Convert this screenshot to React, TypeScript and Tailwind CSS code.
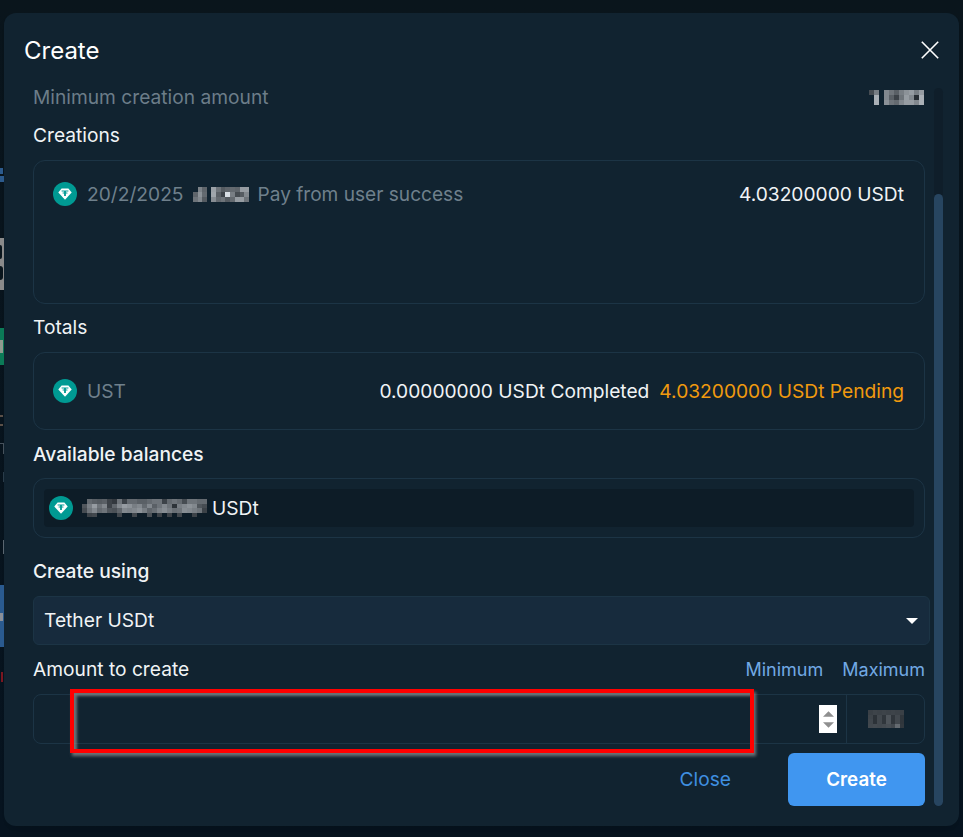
import React from "react";

function Tether({ className = "" }: { className?: string }) {
  return (
    <svg viewBox="0 0 24 24" className={`w-6 h-6 shrink-0 ${className}`}>
      <circle cx="12" cy="12" r="12" fill="#009a93" />
      <path d="M8.6 6.4h6.8l3.3 4.2L12 17.8 5.3 10.6z" fill="#ffffff" />
      <path d="M8.6 8.4h6.8v1.2h-2.5v0.8c1.2.1 2.1.3 2.1.6s-.9.5-2.1.6v2.4h-1.8v-2.4c-1.2-.1-2.1-.3-2.1-.6s.9-.5 2.1-.6v-.8H8.6z" fill="#009a93" />
    </svg>
  );
}

function Mosaic({ rows, sx, sy = sx, className = "" }: { rows: number[][]; sx: number; sy?: number; className?: string }) {
  const w = Math.max(...rows.map((r) => r.length)) * sx;
  const h = rows.length * sy;
  return (
    <svg width={w} height={h} viewBox={`0 0 ${w} ${h}`} shapeRendering="crispEdges" className={`shrink-0 ${className}`}>
      {rows.map((r, y) =>
        r.map((v, x) =>
          v > 0 ? <rect key={`${x}-${y}`} x={x * sx} y={y * sy} width={sx} height={sy} fill={`rgb(${v},${v + 6},${v + 12})`} /> : null
        )
      )}
    </svg>
  );
}

const dateLeft = [
  [0, 125, 95],
  [95, 140, 100],
  [110, 130, 85],
];
const dateRight = [
  [155, 110, 85, 95, 100, 95, 150, 150],
  [160, 90, 60, 215, 120, 70, 85, 130],
  [135, 100, 110, 85, 100, 150, 150, 110],
];
const minBlur = [
  [70, 120, 0, 130, 110, 90, 120, 140, 150, 120, 150],
  [0, 170, 0, 130, 90, 60, 110, 150, 130, 40, 170],
  [0, 170, 0, 140, 110, 100, 130, 150, 150, 130, 170],
];
const balBlur = [
  [0, 100, 90, 85, 90, 60, 50, 110, 60, 100, 100, 90, 90, 100, 110, 110, 60, 100, 110, 100, 70, 110, 110, 100, 100],
  [80, 120, 150, 110, 130, 60, 95, 130, 150, 140, 120, 130, 100, 130, 90, 110, 130, 110, 45, 120, 130, 140, 130, 80, 70],
  [70, 110, 130, 100, 110, 80, 75, 95, 130, 125, 130, 140, 120, 95, 105, 125, 135, 120, 105, 110, 135, 130, 120, 110, 60],
  [0, 60, 65, 0, 0, 0, 0, 65, 0, 0, 65, 0, 0, 75, 0, 60, 0, 60, 0, 65, 0, 0, 60, 0, 0],
];
const unitBlur = [
  [58, 62, 60, 62, 60, 62, 60, 58],
  [62, 44, 66, 48, 78, 48, 66, 48],
  [64, 44, 66, 48, 78, 48, 66, 48],
  [66, 68, 66, 68, 72, 66, 100, 50],
];

export default function App() {
  return (
    <div className="relative w-[963px] h-[837px] overflow-hidden bg-gradient-to-b from-[#0a151c] to-[#071420] pl-[4px] pt-[13px] font-['Inter',sans-serif] text-[19.2px] text-white">
      {/* page behind the dialog, showing at its left edge */}
      <div className="absolute left-0 top-[168px] h-[6px] w-[3px] bg-[#2c5a8c]" />
      <div className="absolute left-0 top-[176px] h-[6px] w-[4px] bg-[#2c5a8c]" />
      <div className="absolute left-0 top-[238px] h-[52px] w-[4px] bg-[#8a8a8a]" />
      <div className="absolute left-0 top-[245px] h-[14px] w-[2px] rounded-r-full bg-[#0a151c]" />
      <div className="absolute left-0 top-[266px] h-[14px] w-[3px] rounded-r-full bg-[#0a151c]" />
      <div className="absolute left-0 top-[328px] h-[37px] w-[4px] bg-[#0b7a57]" />
      <div className="absolute left-0 top-[340px] h-[13px] w-[3px] bg-[#8f9a8f]" />
      <div className="absolute left-0 top-[415px] h-[2px] w-[3px] bg-[#5a5048]" />
      <div className="absolute left-0 top-[424px] h-[2px] w-[3px] bg-[#5a5048]" />
      <div className="absolute left-0 top-[443px] h-[1px] w-[4px] bg-[#46525c]" />
      <div className="absolute left-[3px] top-[443px] h-[11px] w-[1px] bg-[#46525c]" />
      <div className="absolute left-[3px] top-[472px] h-[10px] w-[1px] bg-[#2a3c4a]" />
      <div className="absolute left-[3px] top-[540px] h-[14px] w-[1px] bg-[#5a6670]" />
      <div className="absolute left-0 top-[585px] h-[62px] w-[4px] bg-[#2a5a8f]" />
      <div className="absolute left-0 top-[613px] h-[8px] w-[3px] bg-[#8a8f98]" />
      <div className="absolute left-[1px] top-[672px] h-[10px] w-[2px] bg-[#7a1620]" />

      <div className="flex h-[813px] w-[955px] flex-col rounded-xl bg-[#112330] shadow-lg">
        <div className="flex h-[74px] shrink-0 items-center justify-between pl-5 pr-5">
          <h1 className="pt-[1px] text-[24px] leading-none font-normal">Create</h1>
          <svg viewBox="0 0 18 18" className="h-[18px] w-[18px]" fill="none" stroke="#ffffff" strokeWidth="1.6">
            <path d="M0.8 0.8 17.2 17.2M17.2 0.8 0.8 17.2" />
          </svg>
        </div>

        <div className="flex min-h-0 flex-1 pl-[29px] pr-[16px]">
          <div className="flex w-[892px] flex-col">
            <div className="flex h-[20px] items-center justify-between text-[#6c7d89]">
              <span>Minimum creation amount</span>
              <Mosaic rows={minBlur} sx={5} className="mr-[1px]" />
            </div>
            <div className="mt-[18px] h-[20px] leading-[20px] text-[#f0f3f5]">Creations</div>
            <div className="mt-[15px] flex h-[144px] items-start justify-between rounded-xl border border-[#1c3445] pl-[19px] pr-[20px] pt-[21px]">
              <div className="flex h-[24px] items-center text-[#6f808c]">
                <Tether />
                <span className="ml-[10px] w-[96px]">20/2/2025</span>
                <Mosaic rows={dateLeft} sx={4.5} sy={5} className="ml-[10px]" />
                <Mosaic rows={dateRight} sx={4.75} sy={5} className="ml-[4px]" />
                <span className="ml-[9px] text-[19.1px]">Pay from user success</span>
              </div>
              <span className="h-[24px] leading-[24px] text-[#f0f3f5]">4.03200000 USDt</span>
            </div>

            <div className="mt-[13px] h-[20px] leading-[20px] text-[#f0f3f5]">Totals</div>
            <div className="mt-[15px] flex h-[78px] items-center justify-between rounded-xl border border-[#1c3445] pl-[19px] pr-[20px]">
              <div className="flex items-center text-[#6f808c]">
                <Tether />
                <span className="ml-[10px]">UST</span>
              </div>
              <div className="flex items-center">
                <span className="text-[#f0f3f5]">0.00000000 USDt Completed</span>
                <span className="ml-[10px] text-[#f09a0e]">4.03200000 USDt Pending</span>
              </div>
            </div>

            <div className="mt-[14px] h-[20px] leading-[20px] font-medium text-[#f0f3f5]">Available balances</div>
            <div className="mt-[14px] flex h-[60px] items-center rounded-xl border border-[#1c3445] px-[10px]">
              <div className="flex h-[38px] w-full items-center rounded-sm bg-[#0d1c27] pl-[5px]">
                <Tether />
                <Mosaic rows={balBlur} sx={5} sy={4.5} className="ml-[9px]" />
                <span className="ml-[5px] text-[#f0f3f5]">USDt</span>
              </div>
            </div>

            <div className="mt-[23px] h-[20px] leading-[20px] font-medium text-[#f0f3f5]">Create using</div>
            <div className="mt-[15px] flex h-[49px] w-[897px] items-center justify-between rounded-md border border-[#1c3445] bg-[#172b3d] pl-[10px] pr-[11px]">
              <span className="text-[#f0f3f5]">Tether USDt</span>
              <svg viewBox="0 0 12 6" className="h-[6px] w-[12px]"><path d="M0 0h12L6 6z" fill="#ffffff" /></svg>
            </div>

            <div className="mt-[14px] flex h-[20px] items-center justify-between">
              <span className="text-[#f0f3f5]">Amount to create</span>
              <div className="flex gap-[19px] text-[18px] text-[#71a9e4]">
                <span>Minimum</span>
                <span>Maximum</span>
              </div>
            </div>
            <div className="mt-[15px] flex h-[50px] items-stretch rounded-lg border border-[#1c3445]">
              <div className="flex flex-1 items-center justify-end pr-[9px]">
                <div className="flex h-[28px] w-[18px] flex-col items-center justify-center gap-[5px] bg-white">
                  <svg viewBox="0 0 12 6" className="h-[6px] w-[11px]"><path d="M6 0l6 6H0z" fill="#8f8f8f" /></svg>
                  <svg viewBox="0 0 12 6" className="h-[6px] w-[11px]"><path d="M0 0h12L6 6z" fill="#8f8f8f" /></svg>
                </div>
              </div>
              <div className="flex w-[78px] items-center justify-center border-l border-[#1c3445]">
                <Mosaic rows={unitBlur} sx={4.5} />
              </div>
            </div>

            <div className="mt-[9px] flex items-center justify-end">
              <span className="mr-[57px] text-[#3f8fe0]">Close</span>
              <button className="h-[53px] w-[137px] rounded-md bg-[#4096f0] pt-[1px] text-[18.8px] font-semibold text-white">Create</button>
            </div>
          </div>

          <div className="ml-[9px] mt-[1px] flex h-[718px] w-[9px] flex-col rounded-full bg-[#0f1e2a]">
            <div className="mt-[106px] h-[612px] rounded-full bg-[#274560]" />
          </div>
        </div>
      </div>

      {/* red annotation drawn over the form */}
      <div className="absolute left-[70px] top-[689px] h-[64px] w-[684px] border-[4px] border-[#ff0000] shadow-[2px_3px_3px_rgba(150,150,150,0.7),inset_3px_3px_3px_rgba(150,150,150,0.7)]" />
    </div>
  );
}
